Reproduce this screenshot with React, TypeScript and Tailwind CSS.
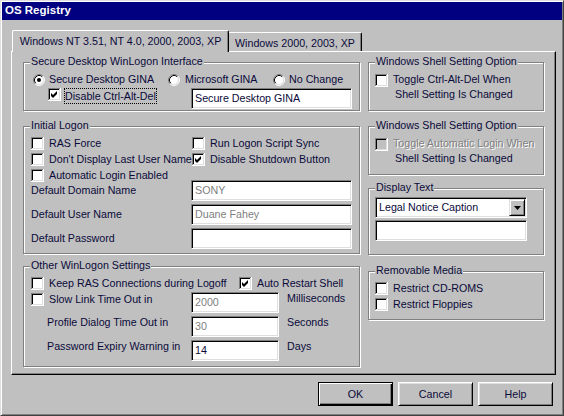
import React from 'react';

const field =
  'bg-white border border-t-[#808080] border-l-[#808080] border-r-white border-b-white shadow-[inset_1px_1px_0_#000,inset_-1px_-1px_0_#dfdfdf]';
const raised =
  'border border-t-white border-l-white border-r-black border-b-black shadow-[inset_1px_1px_0_#dfdfdf,inset_-1px_-1px_0_#808080]';
const disabledText = 'text-[#808080] [text-shadow:1px_1px_0_#fff]';

function Check({ checked = false, disabled = false }: { checked?: boolean; disabled?: boolean }) {
  return (
    <svg width="13" height="13" viewBox="0 0 13 13" className="block shrink-0">
      <rect x="0" y="0" width="13" height="13" fill="#fff" />
      <rect x="0" y="0" width="12" height="12" fill="#808080" />
      <rect x="1" y="1" width="11" height="11" fill="#dfdfdf" />
      <rect x="1" y="1" width="10" height="10" fill="#000" />
      <rect x="2" y="2" width="9" height="9" fill={disabled ? '#c0c0c0' : '#fff'} />
      {checked && <path d="M3 5 L5 7 L9 3 L9 6 L5 10 L3 8 Z" fill="#000" />}
    </svg>
  );
}

function Radio({ checked = false }: { checked?: boolean }) {
  return (
    <svg width="12" height="12" viewBox="0 0 12 12" className="block shrink-0">
      <circle cx="6" cy="6" r="5" fill="#fff" />
      <path d="M2.11 9.89A5.5 5.5 0 0 1 9.89 2.11" stroke="#808080" fill="none" />
      <path d="M9.89 2.11A5.5 5.5 0 0 1 2.11 9.89" stroke="#fff" fill="none" />
      <path d="M2.82 9.18A4.5 4.5 0 0 1 9.18 2.82" stroke="#000" fill="none" />
      <path d="M9.18 2.82A4.5 4.5 0 0 1 2.82 9.18" stroke="#dfdfdf" fill="none" />
      {checked && <circle cx="6" cy="6" r="2" fill="#000" />}
    </svg>
  );
}

function Group({ label, className, children }: { label: string; className: string; children: React.ReactNode }) {
  return (
    <div className={`relative border border-[#808080] shadow-[inset_1px_1px_0_#fff,1px_1px_0_#fff] ${className}`}>
      <span className="absolute left-[6px] top-[-8px] bg-[#c0c0c0] px-[1px] leading-[13px] whitespace-nowrap">
        {label}
      </span>
      {children}
    </div>
  );
}

function Cb({ label, checked, w }: { label: string; checked?: boolean; w?: string }) {
  return (
    <div className={`flex items-center gap-[5px] h-[13px] whitespace-nowrap ${w ?? ''}`}>
      <Check checked={checked} />
      <span className="leading-[13px]">{label}</span>
    </div>
  );
}

function TextBox({ value, w, dim }: { value?: string; w: string; dim?: boolean }) {
  return (
    <div className={`${field} ${w} h-[21px] shrink-0 flex items-center pl-[3px] whitespace-nowrap ${dim ? 'text-[#808080]' : ''}`}>
      {value}
    </div>
  );
}

function Btn({ label, def }: { label: string; def?: boolean }) {
  return (
    <div
      className={`w-[75px] h-[24px] flex items-center justify-center ${
        def
          ? 'border border-black shadow-[inset_1px_1px_0_#fff,inset_-1px_-1px_0_#000,inset_-2px_-2px_0_#808080]'
          : raised
      }`}
    >
      {label}
    </div>
  );
}

export default function App() {
  return (
    <div className="w-[564px] h-[416px] bg-[#c0c0c0] border border-t-[#dfdfdf] border-l-[#dfdfdf] border-r-[#404040] border-b-[#404040] shadow-[inset_1px_1px_0_#fff,inset_-1px_-1px_0_#808080] p-[1px] flex flex-col font-['Liberation_Sans',Arial,sans-serif] text-[10.7px] text-[#0a0a3a]">
      {/* title bar */}
      <div className="h-[18px] bg-[#000080] text-white font-bold text-[11.5px] pl-[3px] flex items-center">
        OS Registry
      </div>

      <div className="pl-[9px] pt-[10px] flex flex-col">
        {/* tabs */}
        <div className="relative z-10 flex items-end h-[21px] pl-[1px]">
          <div className="w-[217px] h-[22px] -mb-[1px] bg-[#c0c0c0] border-l border-t border-r border-l-white border-t-white border-r-black shadow-[inset_-1px_0_0_#808080] rounded-t-[2px] flex items-center justify-center whitespace-nowrap">
            Windows NT 3.51, NT 4.0, 2000, 2003, XP
          </div>
          <div className="w-[133px] h-[19px] pt-[2px] border-t border-r border-t-white border-r-black shadow-[inset_-1px_0_0_#808080] rounded-tr-[2px] flex items-center justify-center whitespace-nowrap">
            Windows 2000, 2003, XP
          </div>
        </div>

        {/* tab panel */}
        <div className="w-[545px] h-[324px] border border-t-white border-l-white border-r-black border-b-black shadow-[inset_-1px_-1px_0_#808080] flex gap-[8px] pl-[11px] pt-[10px]">
          {/* left column */}
          <div className="w-[337px] flex flex-col">
            <Group label="Secure Desktop WinLogon Interface" className="h-[49px] pt-[10px] pl-[9px]">
              <div className="flex items-center h-[13px] whitespace-nowrap">
                <div className="w-[135px] flex items-center gap-[4px]">
                  <Radio checked />
                  <span>Secure Desktop GINA</span>
                </div>
                <div className="w-[105px] flex items-center gap-[5px]">
                  <Radio />
                  <span>Microsoft GINA</span>
                </div>
                <div className="flex items-center gap-[4px]">
                  <Radio />
                  <span>No Change</span>
                </div>
              </div>
              <div className="flex items-start mt-[2px]">
                <div className="w-[143px] ml-[15px] flex items-start gap-[3px]">
                  <Check checked />
                  <span className="h-[16px] border border-dotted border-black leading-[14px] whitespace-nowrap">
                    Disable Ctrl-Alt-Del
                  </span>
                </div>
                <TextBox w="w-[161px]" value="Secure Desktop GINA" />
              </div>
            </Group>

            <Group label="Initial Logon" className="h-[128px] mt-[15px] pt-[10px] pl-[7px]">
              <div className="flex items-center">
                <Cb w="w-[161px]" label="RAS Force" />
                <Cb label="Run Logon Script Sync" />
              </div>
              <div className="flex items-center mt-[3px]">
                <Cb w="w-[161px]" label="Don't Display Last User Name" />
                <Cb label="Disable Shutdown Button" checked />
              </div>
              <div className="flex items-center mt-[3px]">
                <Cb label="Automatic Login Enabled" />
              </div>
              <div className="flex items-center mt-[-2px]">
                <span className="w-[160px]">Default Domain Name</span>
                <TextBox w="w-[161px]" value="SONY" dim />
              </div>
              <div className="flex items-center mt-[3px]">
                <span className="w-[160px]">Default User Name</span>
                <TextBox w="w-[161px]" value="Duane Fahey" dim />
              </div>
              <div className="flex items-center mt-[3px]">
                <span className="w-[160px]">Default Password</span>
                <TextBox w="w-[161px]" />
              </div>
            </Group>

            <Group label="Other WinLogon Settings" className="h-[101px] mt-[12px] pt-[10px] pl-[7px]">
              <div className="flex items-center">
                <Cb w="w-[208px]" label="Keep RAS Connections during Logoff" />
                <Cb label="Auto Restart Shell" checked />
              </div>
              <div className="flex items-start mt-[2px]">
                <div className="w-[160px] mt-[1px]">
                  <Cb label="Slow Link Time Out in" />
                </div>
                <TextBox w="w-[88px]" value="2000" dim />
                <span className="ml-[8px] leading-[13px]">Milliseconds</span>
              </div>
              <div className="flex items-start mt-[3px]">
                <span className="w-[160px] pl-[16px] leading-[13px]">Profile Dialog Time Out in</span>
                <TextBox w="w-[88px]" value="30" dim />
                <span className="ml-[8px] leading-[13px]">Seconds</span>
              </div>
              <div className="flex items-start mt-[3px]">
                <span className="w-[160px] pl-[16px] leading-[13px]">Password Expiry Warning in</span>
                <TextBox w="w-[88px]" value="14" />
                <span className="ml-[8px] leading-[13px]">Days</span>
              </div>
            </Group>
          </div>

          {/* right column */}
          <div className="w-[176px] flex flex-col">
            <Group label="Windows Shell Setting Option" className="h-[49px] pt-[10px] pl-[6px]">
              <div className="flex items-start gap-[5px]">
                <div className="mt-[1px]">
                  <Check />
                </div>
                <div className="leading-[13px] whitespace-nowrap">
                  <div>Toggle Ctrl-Alt-Del When</div>
                  <div className="mt-[2px] pl-[2px]">Shell Setting Is Changed</div>
                </div>
              </div>
            </Group>

            <Group label="Windows Shell Setting Option" className="h-[49px] mt-[15px] pt-[10px] pl-[6px]">
              <div className="flex items-start gap-[5px]">
                <div className="mt-[1px]">
                  <Check disabled />
                </div>
                <div className="leading-[13px] whitespace-nowrap">
                  <div className={disabledText}>Toggle Automatic Login When</div>
                  <div className="mt-[2px] pl-[2px]">Shell Setting Is Changed</div>
                </div>
              </div>
            </Group>

            <Group label="Display Text" className="h-[67px] mt-[13px] pt-[8px] pl-[6px]">
              <div className={`${field} w-[152px] h-[21px] flex items-center justify-between pl-[3px] pr-[1px]`}>
                <span className="whitespace-nowrap">Legal Notice Caption</span>
                <div className={`w-[16px] h-[17px] bg-[#c0c0c0] flex items-center justify-center border border-t-[#dfdfdf] border-l-[#dfdfdf] border-r-black border-b-black shadow-[inset_1px_1px_0_#fff,inset_-1px_-1px_0_#808080]`}>
                  <svg width="7" height="4" viewBox="0 0 7 4" className="block">
                    <path d="M0 0H7L3.5 4Z" fill="#000" />
                  </svg>
                </div>
              </div>
              <div className="mt-[2px]">
                <TextBox w="w-[152px]" />
              </div>
            </Group>

            <Group label="Removable Media" className="h-[49px] mt-[16px] pt-[10px] pl-[6px]">
              <Cb label="Restrict CD-ROMS" />
              <div className="mt-[3px]">
                <Cb label="Restrict Floppies" />
              </div>
            </Group>
          </div>
        </div>

        {/* dialog buttons */}
        <div className="w-[545px] mt-[7px] flex justify-end gap-[5px] pr-[3px]">
          <Btn label="OK" def />
          <Btn label="Cancel" />
          <Btn label="Help" />
        </div>
      </div>
    </div>
  );
}
